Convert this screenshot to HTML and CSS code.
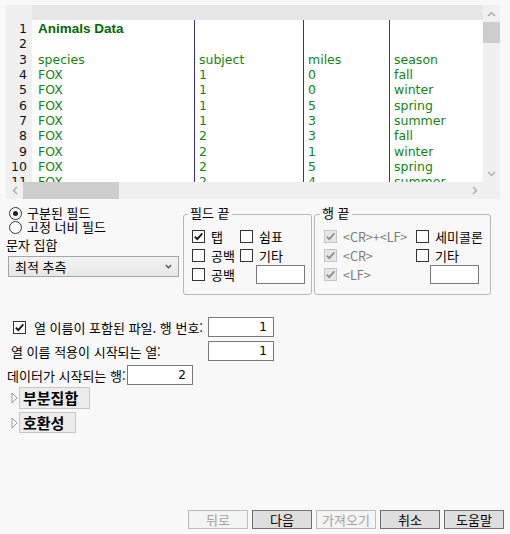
FILE: index.html
```html
<!DOCTYPE html>
<html lang="ko">
<head>
<meta charset="utf-8">
<title>텍스트 가져오기</title>
<link rel="stylesheet" href="styles.css">
</head>
<body>
<div class="page">
  <div class="preview">
    <div class="gutter">
      <div class="cell">1</div><div class="cell">2</div><div class="cell">3</div><div class="cell">4</div>
      <div class="cell">5</div><div class="cell">6</div><div class="cell">7</div><div class="cell">8</div>
      <div class="cell">9</div><div class="cell">10</div><div class="cell">11</div>
    </div>
    <div class="colhead"></div>
    <div class="data">
      <div class="col">
        <div class="cell title">Animals Data</div><div class="cell"></div><div class="cell">species</div>
        <div class="cell">FOX</div><div class="cell">FOX</div><div class="cell">FOX</div><div class="cell">FOX</div>
        <div class="cell">FOX</div><div class="cell">FOX</div><div class="cell">FOX</div><div class="cell">FOX</div>
      </div>
      <div class="col">
        <div class="cell"></div><div class="cell"></div><div class="cell">subject</div>
        <div class="cell">1</div><div class="cell">1</div><div class="cell">1</div><div class="cell">1</div>
        <div class="cell">2</div><div class="cell">2</div><div class="cell">2</div><div class="cell">2</div>
      </div>
      <div class="col">
        <div class="cell"></div><div class="cell"></div><div class="cell">miles</div>
        <div class="cell">0</div><div class="cell">0</div><div class="cell">5</div><div class="cell">3</div>
        <div class="cell">3</div><div class="cell">1</div><div class="cell">5</div><div class="cell">4</div>
      </div>
      <div class="col">
        <div class="cell"></div><div class="cell"></div><div class="cell">season</div>
        <div class="cell">fall</div><div class="cell">winter</div><div class="cell">spring</div><div class="cell">summer</div>
        <div class="cell">fall</div><div class="cell">winter</div><div class="cell">spring</div><div class="cell">summer</div>
      </div>
    </div>
    <div class="vscroll">
      <div class="sarrow"><svg width="9" height="6" viewBox="0 0 9 6"><polyline points="1,5 4.5,1.5 8,5" fill="none" stroke="#a3a3a3" stroke-width="1.2"/></svg></div>
      <div class="vthumb"></div>
      <div class="sfill"></div>
      <div class="sarrow"><svg width="9" height="6" viewBox="0 0 9 6"><polyline points="1,1 4.5,4.5 8,1" fill="none" stroke="#a3a3a3" stroke-width="1.2"/></svg></div>
    </div>
    <div class="hscroll">
      <div class="sarrow h"><svg width="6" height="9" viewBox="0 0 6 9"><polyline points="5,1 1.5,4.5 5,8" fill="none" stroke="#a3a3a3" stroke-width="1.2"/></svg></div>
      <div class="hthumb"></div>
      <div class="sfill"></div>
      <div class="sarrow h"><svg width="6" height="9" viewBox="0 0 6 9"><polyline points="1,1 4.5,4.5 1,8" fill="none" stroke="#a3a3a3" stroke-width="1.2"/></svg></div>
    </div>
    <div class="corner"></div>
  </div>

  <div class="options">
    <div class="left">
      <div class="radio-row"><span class="radio on"></span><span>구분된 필드</span></div>
      <div class="radio-row"><span class="radio"></span><span>고정 너비 필드</span></div>
      <div class="charset-label">문자 집합</div>
      <div class="select"><span>최적 추측</span><svg width="7" height="5" viewBox="0 0 7 5"><polyline points="0.8,1 3.5,3.8 6.2,1" fill="none" stroke="#555" stroke-width="1.3"/></svg></div>
    </div>

    <fieldset class="group field-end">
      <legend>필드 끝</legend>
      <div class="grid">
        <div class="item"><span class="box"><svg width="11" height="11" viewBox="0 0 11 11"><path d="M1.8 5.6 L4.3 8.2 L9.3 2.4" fill="none" stroke="#111" stroke-width="1.8"/></svg></span><span>탭</span></div>
        <div class="item"><span class="box"></span><span>쉼표</span></div>
        <div class="item"><span class="box"></span><span>공백</span></div>
        <div class="item"><span class="box"></span><span>기타</span></div>
        <div class="item"><span class="box"></span><span>공백</span></div>
        <div class="item"><span class="tbox fe"></span></div>
      </div>
    </fieldset>

    <fieldset class="group row-end">
      <legend>행 끝</legend>
      <div class="grid">
        <div class="item"><span class="box dis"><svg width="11" height="11" viewBox="0 0 11 11"><path d="M1.8 5.6 L4.3 8.2 L9.3 2.4" fill="none" stroke="#8e8e8e" stroke-width="1.8"/></svg></span><span class="dis-text">&lt;CR&gt;+&lt;LF&gt;</span></div>
        <div class="item"><span class="box"></span><span>세미콜론</span></div>
        <div class="item"><span class="box dis"><svg width="11" height="11" viewBox="0 0 11 11"><path d="M1.8 5.6 L4.3 8.2 L9.3 2.4" fill="none" stroke="#8e8e8e" stroke-width="1.8"/></svg></span><span class="dis-text">&lt;CR&gt;</span></div>
        <div class="item"><span class="box"></span><span>기타</span></div>
        <div class="item"><span class="box dis"><svg width="11" height="11" viewBox="0 0 11 11"><path d="M1.8 5.6 L4.3 8.2 L9.3 2.4" fill="none" stroke="#8e8e8e" stroke-width="1.8"/></svg></span><span class="dis-text">&lt;LF&gt;</span></div>
        <div class="item"><span class="tbox re"></span></div>
      </div>
    </fieldset>
  </div>

  <div class="fields">
    <div class="frow frow1"><span class="box"><svg width="11" height="11" viewBox="0 0 11 11"><path d="M1.8 5.6 L4.3 8.2 L9.3 2.4" fill="none" stroke="#111" stroke-width="1.8"/></svg></span><span class="flabel">열 이름이 포함된 파일. 행 번호:</span><span class="num">1</span></div>
    <div class="frow frow2"><span class="flabel">열 이름 적용이 시작되는 열:</span><span class="num">1</span></div>
    <div class="frow frow3"><span class="flabel">데이터가 시작되는 행:</span><span class="num">2</span></div>
  </div>

  <div class="disc first"><svg class="tri" width="7" height="12" viewBox="0 0 7 12"><path d="M1 1 L6 6 L1 11 Z" fill="#fff" stroke="#9a9a9a" stroke-width="1"/></svg><span class="disc-btn">부분집합</span></div>
  <div class="disc second"><svg class="tri" width="7" height="12" viewBox="0 0 7 12"><path d="M1 1 L6 6 L1 11 Z" fill="#fff" stroke="#9a9a9a" stroke-width="1"/></svg><span class="disc-btn">호환성</span></div>

  <div class="footer">
    <span class="btn dis">뒤로</span>
    <span class="btn">다음</span>
    <span class="btn dis">가져오기</span>
    <span class="btn">취소</span>
    <span class="btn">도움말</span>
  </div>
</div>
</body>
</html>
```

FILE: styles.css
```css
body {
  margin: 0;
  background: #f8f8f8;
  font-family: "Noto Sans CJK KR", "Noto Sans", sans-serif;
  font-size: 13px;
  color: #000;
}

.page {
  width: 510px;
  height: 534px;
  box-sizing: border-box;
  padding: 5px 0 5px 6px;
  display: flex;
  flex-direction: column;
}

/* preview */
.preview {
  display: grid;
  grid-template-columns: 26px 451px 17px;
  grid-template-rows: 15px 162px 17px;
  width: 494px;
}

.gutter {
  grid-column: 1;
  grid-row: 1 / 3;
  background: #f0f0f0;
  padding: 16px 5px 0 0;
  text-align: right;
  font-family: "DejaVu Sans", sans-serif;
  font-size: 12.5px;
  line-height: 15.33px;
  overflow: hidden;
  color: #111;
}

.cell {
  height: 15.33px;
  line-height: 15.33px;
  white-space: nowrap;
}

.colhead {
  grid-column: 2;
  grid-row: 1;
  background: #e6e6e6;
}

.data {
  grid-column: 2;
  grid-row: 2;
  background: #fff;
  display: grid;
  grid-template-columns: 163px 109px 86px 93px;
  overflow: hidden;
  font-family: "DejaVu Sans", sans-serif;
  font-size: 12.5px;
  color: #0f870f;
}

.col {
  box-sizing: border-box;
  padding: 1px 0 0 4px;
  border-right: 1px solid #3232a6;
  overflow: hidden;
}

.col:first-child {
  padding-left: 6px;
}

.col:last-child {
  border-right: 0;
}

.title {
  font-family: "Liberation Sans", sans-serif;
  font-weight: bold;
  font-size: 13.5px;
  color: #006b00;
}

.vscroll {
  grid-column: 3;
  grid-row: 1 / 3;
  background: #f0f0f0;
  display: flex;
  flex-direction: column;
}

.hscroll {
  grid-column: 1 / 3;
  grid-row: 3;
  background: #f0f0f0;
  display: flex;
}

.corner {
  grid-column: 3;
  grid-row: 3;
  background: #f0f0f0;
}

.sarrow {
  height: 17px;
  flex: none;
  display: flex;
  align-items: center;
  justify-content: center;
}

.sarrow.h {
  width: 17px;
  height: auto;
}

.sfill {
  flex: 1;
}

.vthumb {
  height: 21px;
  background: #cdcdcd;
}

.hthumb {
  width: 96px;
  background: #cdcdcd;
}

/* options */
.options {
  display: flex;
  align-items: flex-start;
  margin-top: 7px;
}

.left {
  width: 177px;
  flex: none;
}

.radio-row {
  display: flex;
  align-items: center;
  gap: 5px;
  height: 14px;
  line-height: 14px;
  padding-left: 3px;
}

.radio {
  width: 13px;
  height: 13px;
  box-sizing: border-box;
  border: 1px solid #333;
  border-radius: 50%;
  background: #fff;
  display: flex;
  align-items: center;
  justify-content: center;
}

.radio.on::after {
  content: "";
  width: 5px;
  height: 5px;
  border-radius: 50%;
  background: #222;
}

.charset-label {
  margin-top: 4px;
  line-height: 14px;
  height: 14px;
}

.select {
  margin: 4px 0 0 2px;
  width: 171px;
  height: 21px;
  box-sizing: border-box;
  border: 1px solid #a6a6a6;
  background: linear-gradient(#f3f3f3, #e7e7e7);
  display: flex;
  align-items: center;
  justify-content: space-between;
  padding: 0 6px;
}

.group {
  margin: 0;
  border: 1px solid #b8b8b8;
  border-radius: 3px;
  padding: 4px 0 10px 8px;
  min-width: 0;
  box-sizing: border-box;
  width: 129px;
  flex: none;
}

.group legend {
  padding: 0 2px 3px;
  margin-left: -4px;
  line-height: 14px;
}

.row-end {
  width: 177px;
  margin-left: 2px;
  padding-left: 9px;
}

.grid {
  display: grid;
  grid-template-columns: 48px auto;
  grid-auto-rows: 19px;
}

.row-end .grid {
  grid-template-columns: 92px auto;
}

.item {
  display: flex;
  align-items: center;
  gap: 6px;
  white-space: nowrap;
}

.box {
  width: 13px;
  height: 13px;
  box-sizing: border-box;
  border: 1px solid #333;
  background: #fff;
  flex: none;
  display: flex;
  align-items: center;
  justify-content: center;
}

.box.dis {
  border-color: #c6c6c6;
  background: #e6e6e6;
}

.dis-text {
  color: #7a7a7a;
  font-size: 12.5px;
}

.tbox {
  width: 49px;
  height: 19px;
  box-sizing: border-box;
  border: 1px solid #7a7a7a;
  background: #fff;
}

.tbox.fe {
  margin-left: 16px;
}

.tbox.re {
  margin-left: 14px;
}

/* fields */
.fields {
  margin-top: 22px;
  display: flex;
  flex-direction: column;
  gap: 4px;
}

.frow {
  display: flex;
  align-items: center;
  height: 20px;
}

.frow1 {
  padding-left: 7px;
}

.frow1 .box {
  margin-right: 8px;
}

.frow1 .flabel {
  width: 174px;
}

.frow2 .flabel {
  margin-left: 5px;
  width: 197px;
}

.frow3 .flabel {
  margin-left: 1px;
  width: 120px;
}

.flabel {
  white-space: nowrap;
}

.num {
  width: 66px;
  height: 20px;
  box-sizing: border-box;
  border: 1px solid #7a7a7a;
  background: #fff;
  text-align: right;
  padding-right: 6px;
  line-height: 18px;
  font-family: "DejaVu Sans", sans-serif;
  font-size: 12px;
}

/* disclosures */
.disc {
  display: flex;
  align-items: center;
  gap: 1px;
  padding-left: 5px;
}

.disc.first {
  margin-top: 2px;
}

.disc.second {
  margin-top: 3px;
}

.disc-btn {
  height: 22px;
  box-sizing: border-box;
  border: 1px solid #c6c6c6;
  background: #ececec;
  font-size: 15px;
  font-weight: 700;
  line-height: 20px;
  padding: 0 11px 0 3px;
}

.disc.second .disc-btn {
  height: 21px;
  line-height: 19px;
}

/* footer */
.footer {
  margin-top: auto;
  align-self: flex-end;
  margin-right: 6px;
  display: flex;
  gap: 4px;
}

.btn {
  width: 60px;
  height: 19px;
  box-sizing: border-box;
  border: 1px solid #707070;
  background: #dedede;
  text-align: center;
  line-height: 17px;
  font-size: 13px;
}

.btn.dis {
  border-color: #bdbdbd;
  background: #f4f4f4;
  color: #a3a3a3;
}
```
